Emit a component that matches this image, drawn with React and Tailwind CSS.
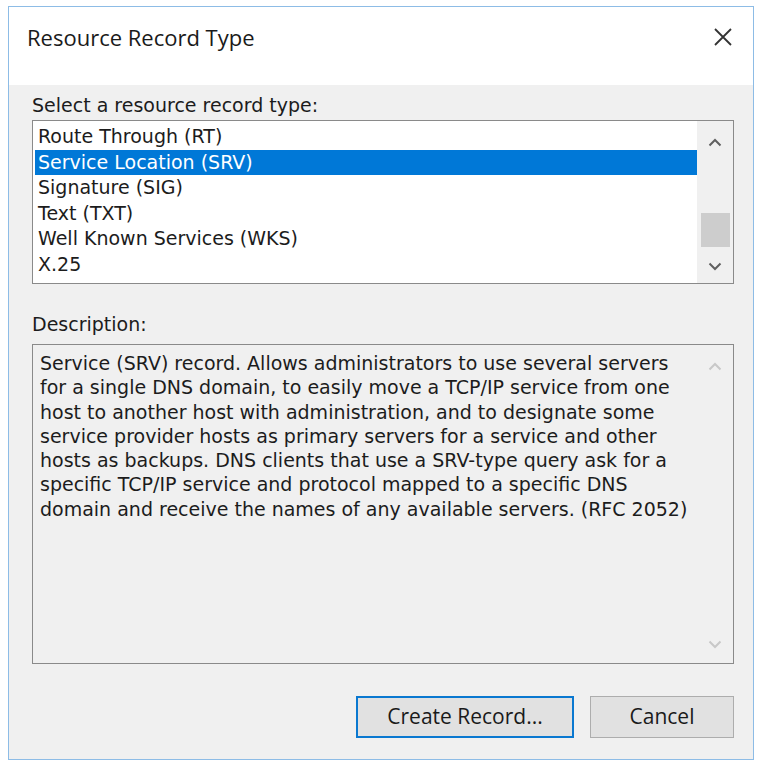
import React from "react";

const items = [
  "Route Through (RT)",
  "Service Location (SRV)",
  "Signature (SIG)",
  "Text (TXT)",
  "Well Known Services (WKS)",
  "X.25",
];

const desc = [
  "Service (SRV) record. Allows administrators to use several servers",
  "for a single DNS domain, to easily move a TCP/IP service from one",
  "host to another host with administration, and to designate some",
  "service provider hosts as primary servers for a service and other",
  "hosts as backups. DNS clients that use a SRV-type query ask for a",
  "specific TCP/IP service and protocol mapped to a specific DNS",
  "domain and receive the names of any available servers. (RFC 2052)",
];

function Chevron({ up, color }) {
  return (
    <svg width="14" height="9" viewBox="0 0 14 9">
      <path
        d={up ? "M1.5 7.5 L7 2 L12.5 7.5" : "M1.5 1.5 L7 7 L12.5 1.5"}
        fill="none"
        stroke={color}
        strokeWidth="2"
      />
    </svg>
  );
}

export default function App() {
  return (
    <div className="w-[757px] h-[762px] bg-white overflow-hidden">
      <div className="ml-[8px] mt-[6px] w-[746px] h-[754px] border border-[#8dbce6] flex flex-col">
        <div className="h-[78px] bg-white flex items-start justify-between pl-[18px] pr-[20px] pt-[15px] shrink-0">
          <span className="text-[22px] leading-[30px] text-[#1a1a1a] font-['Open_Sans',sans-serif]">
            Resource Record Type
          </span>
          <div className="h-[30px] flex items-center">
            <svg width="20" height="20" viewBox="0 0 20 20">
              <path d="M2 2 L18 18 M18 2 L2 18" stroke="#333" strokeWidth="1.8" fill="none" />
            </svg>
          </div>
        </div>
        <div className="flex-1 bg-[#f0f0f0] pl-[23px] pr-[19px] pt-[6px] flex flex-col font-['DejaVu_Sans',sans-serif] text-[19px] text-[#1c1c1c]">
          <div className="h-[29px] flex items-center leading-none">Select a resource record type:</div>
          <div className="h-[164px] bg-white border border-[#8a8a8a] flex">
            <div className="flex-1 pt-[3px] pl-[2px]">
              {items.map((t, i) => (
                <div
                  key={t}
                  className={
                    i === 1
                      ? "h-[25.5px] flex items-center pl-[3px] bg-[#0078d7] text-white leading-none"
                      : "h-[25.5px] flex items-center pl-[3px] leading-none"
                  }
                >
                  {t}
                </div>
              ))}
            </div>
            <div className="w-[36px] bg-[#f0f0f0] flex flex-col items-center">
              <div className="h-[42px] flex items-center justify-center">
                <Chevron up color="#606060" />
              </div>
              <div className="h-[50px]" />
              <div className="w-[29px] h-[34px] bg-[#cdcdcd]" />
              <div className="flex-1 flex items-center justify-center pt-[2px]">
                <Chevron color="#606060" />
              </div>
            </div>
          </div>
          <div className="h-[60px] flex items-end pb-[10px] leading-none">Description:</div>
          <div className="h-[320px] border border-[#8a8a8a] flex bg-[#f0f0f0]">
            <div className="flex-1 pl-[7px] pt-[6px] leading-[24.3px]">
              {desc.map((l) => (
                <div key={l} className="whitespace-nowrap">{l}</div>
              ))}
            </div>
            <div className="w-[36px] flex flex-col items-center justify-between pt-[17px] pb-[14px]">
              <Chevron up color="#c8c8c8" />
              <Chevron color="#c8c8c8" />
            </div>
          </div>
          <div className="flex justify-end gap-[16px] pt-[32px] font-['Open_Sans',sans-serif] text-[21px]">
            <button className="w-[218px] h-[42px] border-2 border-[#0a78d0] bg-[#e1e1e1] text-[#1a1a1a]">
              Create Record...
            </button>
            <button className="w-[144px] h-[42px] border border-[#adadad] bg-[#e1e1e1] text-[#1a1a1a]">
              Cancel
            </button>
          </div>
        </div>
      </div>
    </div>
  );
}
